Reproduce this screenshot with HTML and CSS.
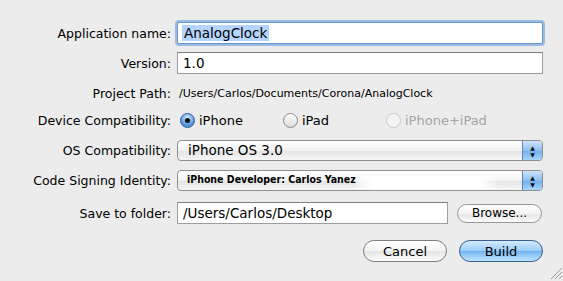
FILE: index.html
```html
<!DOCTYPE html>
<html lang="en">
<head>
  <meta charset="UTF-8" />
  <title>Build for iPhone</title>
  <link rel="stylesheet" href="styles.css">
</head>
<body>
  <div class="dialog">
    <div class="row">
      <label class="lbl">Application name:</label>
      <div class="field focus"><span class="sel">AnalogClock</span></div>
    </div>
    <div class="row">
      <label class="lbl">Version:</label>
      <div class="field">1.0</div>
    </div>
    <div class="row">
      <label class="lbl">Project Path:</label>
      <div class="path">/Users/Carlos/Documents/Corona/AnalogClock</div>
    </div>
    <div class="row devices">
      <label class="lbl">Device Compatibility:</label>
      <div class="radios">
        <span class="radio on"><i></i>iPhone</span>
        <span class="radio"><i></i>iPad</span>
        <span class="radio off"><i></i>iPhone+iPad</span>
      </div>
    </div>
    <div class="row">
      <label class="lbl">OS Compatibility:</label>
      <div class="popup"><span class="txt">iPhone OS 3.0</span><span class="arrows">&#9650;<br>&#9660;</span></div>
    </div>
    <div class="row">
      <label class="lbl">Code Signing Identity:</label>
      <div class="popup small"><span class="txt">iPhone Developer: Carlos Yanez</span><span class="blot"></span><span class="fill"></span><span class="arrows">&#9650;<br>&#9660;</span></div>
    </div>
    <div class="row folder-row">
      <label class="lbl">Save to folder:</label>
      <div class="folder">
        <div class="field">/Users/Carlos/Desktop</div>
        <button class="btn mini">Browse...</button>
      </div>
    </div>
    <div class="actions">
      <button class="btn">Cancel</button>
      <button class="btn default">Build</button>
    </div>
    <svg class="grip" width="12" height="12" viewBox="0 0 12 12">
      <path d="M1 12 L12 1 M5 12 L12 5 M9 12 L12 9" stroke="#9a9a9a" stroke-width="1" fill="none"/>
    </svg>
  </div>
</body>
</html>
```

FILE: styles.css
```css
* { box-sizing: border-box; }

body {
  margin: 0;
  background: #ececec;
  font-family: "DejaVu Sans", sans-serif;
  font-size: 13px;
  color: #000;
}

.dialog {
  position: relative;
  width: 563px;
  height: 281px;
  padding-top: 22px;
  display: flex;
  flex-direction: column;
  gap: 8px;
}

.row {
  display: grid;
  grid-template-columns: 171px 366px;
  column-gap: 6px;
  align-items: center;
  height: 22px;
}

.row.devices {
  height: 20px;
  margin-top: -2px;
  margin-bottom: 1px;
}

.row.folder-row {
  margin-top: 3px;
}

.lbl {
  text-align: right;
  font-size: 12.5px;
}

/* Campos de texto */
.field {
  height: 22px;
  background: #fff;
  border: 1px solid #9d9d9d;
  border-top-color: #7e7e7e;
  padding: 1px 5px 0;
  font-size: 13.5px;
  line-height: 19px;
  white-space: nowrap;
}

.field.focus {
  border-color: #6a94cc;
  box-shadow: 0 0 0 2px #9bbbe3;
  border-radius: 2px;
  padding-left: 4px;
}

.sel {
  background: #b5d5ff;
  padding: 0 2px;
}

.path {
  font-size: 11px;
  padding-left: 2px;
}

/* Radios */
.radios {
  display: grid;
  grid-template-columns: 103px 103px auto;
  padding-left: 3px;
}

.radio {
  display: flex;
  align-items: center;
  gap: 4px;
  font-size: 13px;
}

.radio i {
  width: 15px;
  height: 15px;
  border-radius: 50%;
  border: 1px solid #8a8a8a;
  background: linear-gradient(#fdfdfd, #dcdcdc);
  position: relative;
}

.radio.on i {
  border-color: #2d5f9e;
  background: radial-gradient(circle at 50% 30%, #d6ebff, #5a9be0 60%, #3a7ccc);
}

.radio.on i::after {
  content: "";
  position: absolute;
  left: 4px;
  top: 4px;
  width: 5px;
  height: 5px;
  border-radius: 50%;
  background: #111;
}

.radio.off {
  color: #a4a4a4;
}

.radio.off i {
  border-color: #c8c8c8;
  background: #f4f4f4;
}

/* Popups */
.popup {
  height: 21px;
  display: flex;
  align-items: center;
  border: 1px solid #8f8f8f;
  border-radius: 4px;
  background: linear-gradient(#fefefe, #f2f2f2 50%, #e3e3e3 51%, #f6f6f6);
  overflow: hidden;
}

.popup .txt {
  flex: 1;
  padding-left: 10px;
  font-size: 13.5px;
  white-space: nowrap;
}

.popup.small .txt {
  flex: none;
  font-family: "DejaVu Sans Condensed", "DejaVu Sans", sans-serif;
  font-size: 10.5px;
  font-weight: bold;
  padding-left: 9px;
  padding-bottom: 3px;
}

.blot {
  width: 140px;
  align-self: stretch;
  margin: 5px 0 0 0;
  background: linear-gradient(90deg, rgba(255,255,255,0.3), #fff 12%, #fff 88%, rgba(255,255,255,0.3));
}

.fill {
  flex: 1;
}

.arrows {
  width: 20px;
  align-self: stretch;
  border-left: 1px solid #5d86b8;
  background: linear-gradient(#cfe4fb, #8ec0f2 50%, #6eaef0 51%, #a7d6fb);
  font-size: 6px;
  line-height: 7px;
  text-align: center;
  padding-top: 3px;
  color: #111;
}

/* Carpeta */
.folder {
  display: flex;
  align-items: center;
  gap: 9px;
}

.folder .field {
  width: 271px;
}

/* Botones */
.btn {
  font-family: "DejaVu Sans", sans-serif;
  font-size: 13px;
  width: 84px;
  height: 22px;
  border: 1px solid #7f7f7f;
  border-radius: 11px;
  background: linear-gradient(#ffffff, #f3f3f3 50%, #e4e4e4 51%, #fbfbfb);
  color: #000;
  padding: 0;
}

.btn.mini {
  width: 85px;
  height: 19px;
  font-size: 12px;
  border-radius: 10px;
  border-color: #969696;
}

.btn.default {
  border-color: #3b5f90;
  background: linear-gradient(#d4ebff, #99cbf8 50%, #72b3f2 51%, #bfe6ff);
}

.actions {
  display: flex;
  justify-content: flex-end;
  gap: 12px;
  padding-right: 20px;
  margin-top: 8px;
}

/* Agarradera de la esquina */
.grip {
  position: absolute;
  right: 1px;
  bottom: 2px;
}
```
